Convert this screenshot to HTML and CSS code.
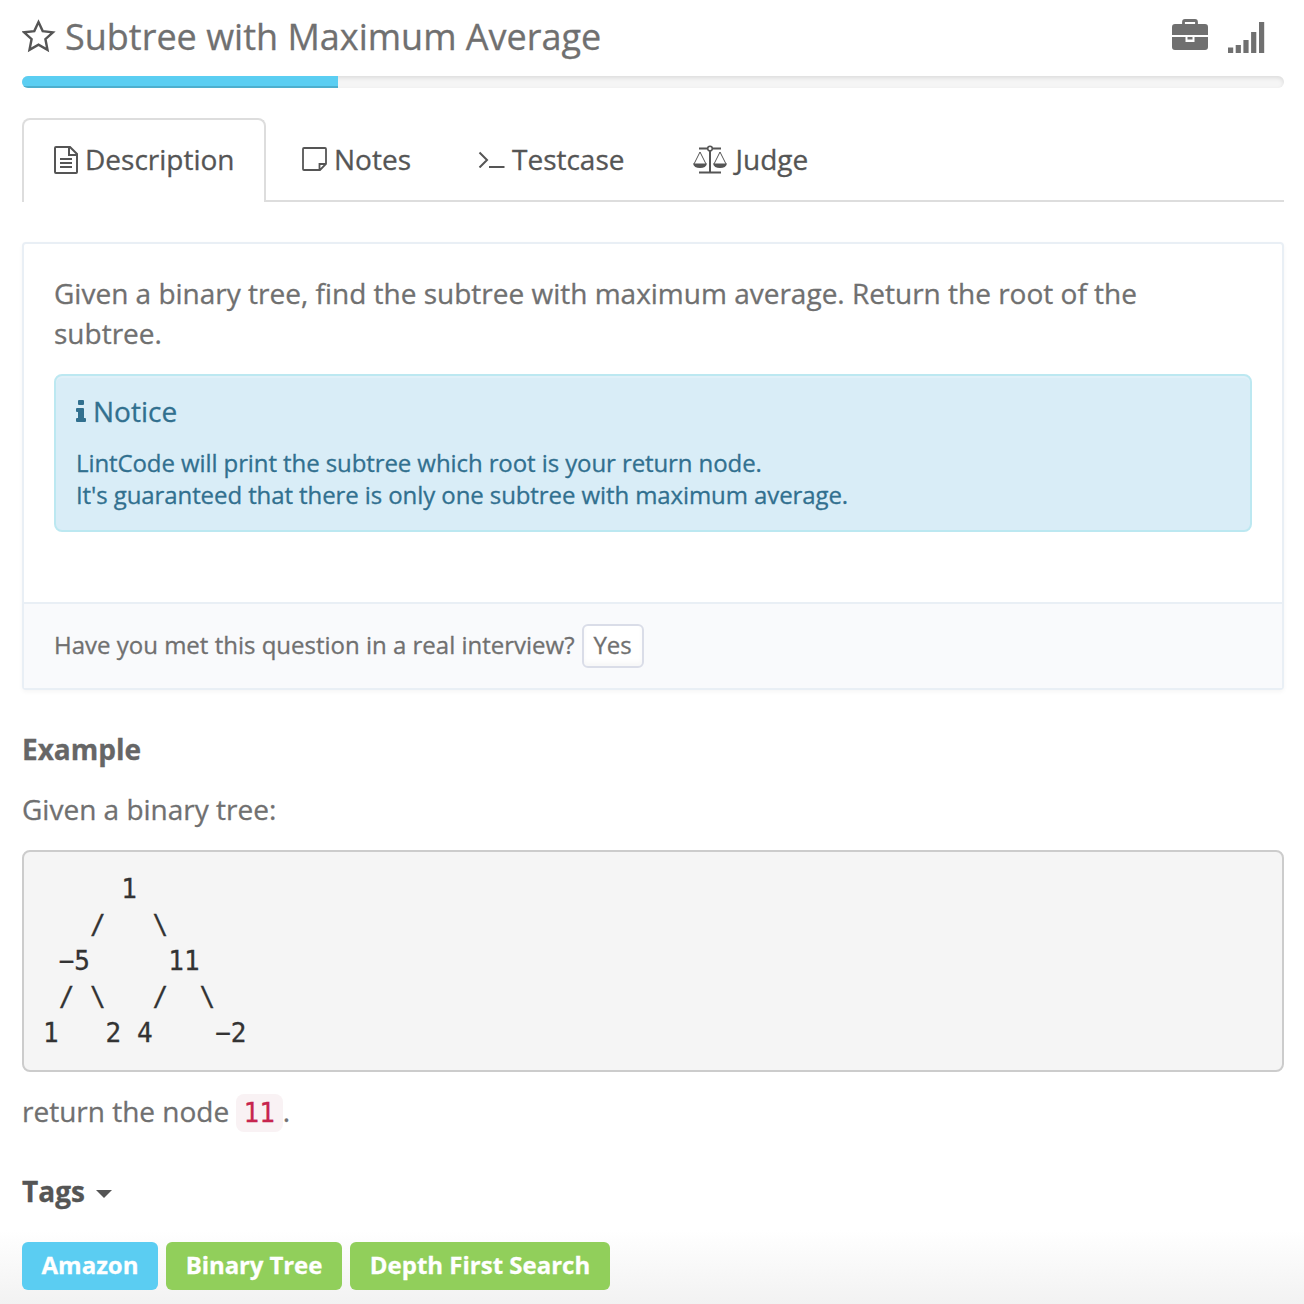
FILE: index.html
```html
<!DOCTYPE html>
<html lang="en">
<head>
<meta charset="utf-8">
<title>Subtree with Maximum Average</title>
<link rel="stylesheet" href="styles.css">
</head>
<body>
<main class="page">
  <header class="header">
    <svg class="star" width="34" height="34" viewBox="0 0 34 34"><path d="M16.500 3 20.700 12.100 30.900 13.300 23.400 20.100 25.500 30.800 16.500 25.600 7.500 30.800 9.600 20.100 2.100 13.300 12.300 12.100Z" fill="none" stroke="#555" stroke-width="2.400"/></svg>
    <h1 class="title">Subtree with Maximum Average</h1>
    <svg class="briefcase" width="36" height="32" viewBox="0 0 36 32"><path d="M11.500 6V3Q11.500 1.500 13 1.500h10Q24.500 1.500 24.500 3V6" fill="none" stroke="#707070" stroke-width="2.800"/><path d="M3 5h30a3 3 0 0 1 3 3v8H0V8a3 3 0 0 1 3-3ZM0 18h13.500v5h9v-5H36v10a3 3 0 0 1-3 3H3a3 3 0 0 1-3-3ZM15.500 18h5v2.500h-5Z" fill="#707070"/></svg>
    <svg class="signal" width="37" height="32" viewBox="0 0 37 32"><path d="M0 26.500h5.200V32H0ZM7.700 24h5.200v8H7.700ZM15.400 19h5.200v13h-5.200ZM23.100 11h5.200v21h-5.200ZM31 1h5.200v31H31Z" fill="#707070"/></svg>
  </header>
  <div class="progress"><div class="progress-bar" style="width:25%"></div></div>
  <nav class="tabs">
    <a class="tab active"><svg width="24" height="28" viewBox="0 0 24 28"><path d="M2 1h14l7 7v18.100q0 .9-.9.900H1.900Q1 27 1 26.100V1.900Q1 1 2 1ZM15 1v8h8" fill="none" stroke="#555" stroke-width="2"/><path d="M6 13h12M6 17h12M6 21h12" stroke="#555" stroke-width="2"/></svg><span class="tab-label">Description</span></a>
    <a class="tab notes"><svg width="25" height="24" viewBox="0 0 25 24"><path d="M2 1h21q1 0 1 1v15l-6 6H2q-1 0-1-1V2q0-1 1-1ZM24 17h-6.500v6" fill="none" stroke="#555" stroke-width="1.800"/></svg>Notes</a>
    <a class="tab testcase"><svg width="27" height="18" viewBox="0 0 27 18"><path d="M1.500 2.500 9 10 1.500 17.500" fill="none" stroke="#555" stroke-width="2"/><path d="M11 17h15.500" stroke="#555" stroke-width="2"/></svg>Testcase</a>
    <a class="tab judge"><svg width="34" height="29" viewBox="0 0 34 29"><path d="M6 3.500h8.500M19.500 3.500H28M17 6v21M6 27.500h22" fill="none" stroke="#555" stroke-width="2"/><circle cx="17" cy="3.500" r="2.300" fill="none" stroke="#555" stroke-width="1.600"/><path d="M1 19 7 7l6 12M21 19l6-12 6 12" fill="none" stroke="#555" stroke-width="1"/><path d="M0 18.500h14q-1 4.500-7 4.500t-7-4.500ZM20 18.500h14q-1 4.500-7 4.500t-7-4.500Z" fill="#555"/></svg>Judge</a>
  </nav>
  <section class="card">
    <div class="card-body">
      <p class="statement">Given a binary tree, find the subtree with maximum average. Return the root of the subtree.</p>
      <div class="notice">
        <h2 class="notice-title"><svg width="10" height="22" viewBox="0 0 10 22"><path d="M3 0h4q1 0 1 1v3q0 1-1 1H3Q2 5 2 4V1q0-1 1-1ZM1 8h6q1 0 1 1v9h1q1 0 1 1v2q0 1-1 1H1q-1 0-1-1v-2q0-1 1-1h1v-6H1q-1 0-1-1V9q0-1 1-1Z" fill="#31708f"/></svg>Notice</h2>
        <p class="notice-text">LintCode will print the subtree which root is your return node.<br>It's guaranteed that there is only one subtree with maximum average.</p>
      </div>
    </div>
    <footer class="card-footer"><span class="question">Have you met this question in a real interview?</span><button class="yes">Yes</button></footer>
  </section>
  <h3 class="heading">Example</h3>
  <p class="para">Given a binary tree:</p>
  <pre class="tree">     1
   /   \
 −5     11
 / \   /  \
1   2 4    −2</pre>
  <p class="para result">return the node <code class="code">11</code>.</p>
  <h3 class="heading tags-heading">Tags<span class="caret"></span></h3>
  <div class="tags"><span class="tag company">Amazon</span><span class="tag topic">Binary Tree</span><span class="tag">Depth First Search</span></div>
</main>
</body>
</html>
```
FILE: styles.css
```css
* { box-sizing: border-box; }
body {
  margin: 0;
  height: 1304px;
  overflow: hidden;
  background: linear-gradient(#fff 1230px, #f2f2f2 1304px);
  font-family: "Open Sans", sans-serif;
  font-size: 28px;
  line-height: 40px;
  color: #707070;
  -webkit-text-stroke: 0.3px;
}
h1, h2, h3, p, pre { margin: 0; }
svg { flex: none; display: block; }
.page { padding: 0 20px 0 22px; }
.header { display: flex; height: 76px; }
.star { margin-top: 19px; }
.title { margin-left: 9px; padding-top: 12px; font-size: 36px; line-height: 50px; font-weight: 400; flex: 1; white-space: nowrap; }
.briefcase { margin-top: 19px; }
.signal { margin: 21px 19px 0 20px; }
.progress { height: 12px; border-radius: 6px; background: #f5f5f5; box-shadow: inset 0 2px 4px rgba(0,0,0,.1); overflow: hidden; }
.progress-bar { height: 12px; background: #5bcef2; box-shadow: inset 0 -2px 0 rgba(0,0,0,.15); }
.tabs { display: flex; margin-top: 30px; height: 84px; border-bottom: 2px solid #ddd; color: #555; }
.tab { display: flex; align-items: center; height: 82px; white-space: nowrap; }
.active { width: 244px; height: 84px; padding: 0 0 2px 30px; gap: 7px; border: 2px solid #ddd; border-bottom: 0; border-radius: 8px 8px 0 0; background: #fff; }
.tab-label { padding-bottom: 2px; }
.notes { margin-left: 36px; gap: 7px; }
.testcase { margin-left: 67px; gap: 7px; }
.judge { margin-left: 68px; gap: 9px; }
.card { margin-top: 40px; height: 448px; border: 2px solid #e9eff5; border-radius: 4px; background: #fff; box-shadow: 0 2px 4px rgba(0,0,0,.04); }
.card-body { height: 358px; padding: 29px 30px 30px; }
.notice { height: 158px; margin-top: 21px; padding: 15px 20px; border: 2px solid #bce8f1; border-radius: 8px; background: #d9edf7; box-shadow: inset 0 2px 0 rgba(255,255,255,.2); color: #31708f; }
.notice-title { display: flex; align-items: center; gap: 7px; font-size: 28px; font-weight: 400; line-height: 40px; }
.notice-text { margin-top: 16px; font-size: 24px; line-height: 32px; letter-spacing: -0.09px; }
.card-footer { display: flex; align-items: center; height: 86px; padding: 0 30px; gap: 7px; border-top: 2px solid #e9eff5; background: #f9fafc; font-size: 24px; }
.question { padding-bottom: 2px; }
.yes { width: 62px; height: 44px; padding: 0 0 2px; border: 2px solid #dadde8; border-radius: 6px; background: #fff; box-shadow: inset 0 -4px 4px rgba(0,0,0,.03); font: 24px/38px "Open Sans", sans-serif; color: #707070; -webkit-text-stroke: 0.3px; }
.heading { margin-top: 39px; font-size: 28px; line-height: 40px; font-weight: 700; color: #666; }
.para { margin-top: 20px; }
.tree { height: 222px; margin-top: 21px; padding: 19px; border: 2px solid #ccc; border-radius: 8px; background: #f5f5f5; color: #333; font: 26px/36px "DejaVu Sans Mono", monospace; }
.result { margin-top: 19px; }
.code { margin-left: -1px; padding: 4px 8px; border-radius: 8px; background: #f9f2f4; color: #c7254e; font: 26px/30px "DejaVu Sans Mono", monospace; }
.tags-heading { display: flex; align-items: center; gap: 11px; margin-top: 40px; color: #555; }
.caret { margin-top: 6px; border: 8px solid transparent; border-top-color: #555; border-bottom: 0; }
.tags { display: flex; gap: 8px; margin-top: 31px; }
.tag { display: flex; justify-content: center; width: 260px; height: 48px; border-radius: 6px; background: #91cf5b; color: #fff; font-size: 24px; line-height: 46px; font-weight: 700; white-space: nowrap; }
.company { width: 136px; background: #5bcdf2; }
.topic { width: 176px; letter-spacing: -0.1px; }
```
